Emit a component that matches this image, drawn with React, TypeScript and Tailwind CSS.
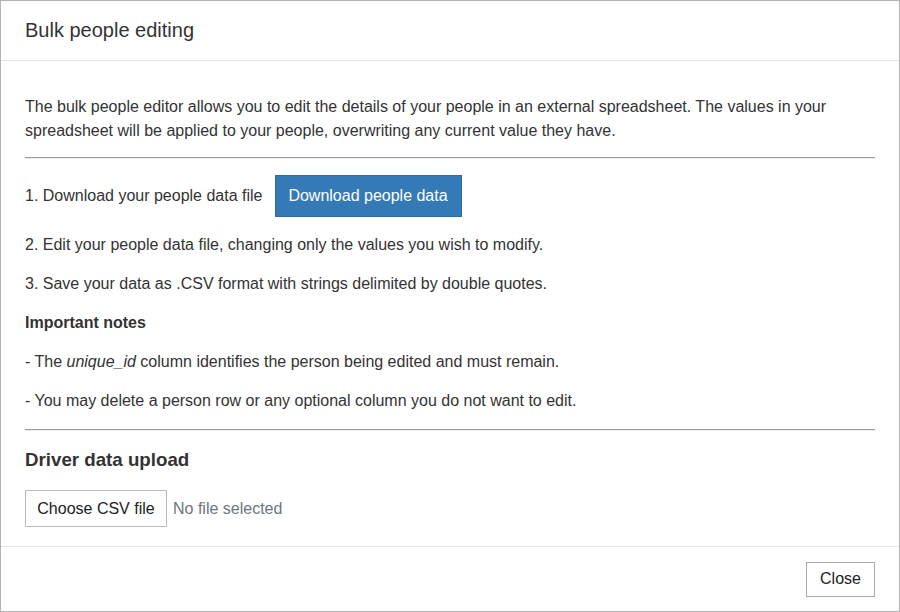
export default function App() {
  return (
    <div
      className="w-[900px] h-[612px] border border-[#b3b3b3] bg-white flex flex-col text-[#333] text-[16px] leading-[24px]"
      style={{ fontFamily: '"Liberation Sans", Arial, sans-serif' }}
    >
      <div className="h-[60px] border-b border-[#e5e5e5] px-[24px] pb-[2px] flex items-center shrink-0">
        <h1 className="text-[20px] leading-[24px] font-normal">Bulk people editing</h1>
      </div>
      <div className="flex-1 px-[24px] pt-[34px]">
        <p>
          The bulk people editor allows you to edit the details of your people in an external spreadsheet. The values in your
          spreadsheet will be applied to your people, overwriting any current value they have.
        </p>
        <hr className="mt-[14px] border-0 border-t border-t-[#999] border-b border-b-[#eee]" />
        <div className="mt-[16px] flex items-center gap-[12px]">
          <span>1. Download your people data file</span>
          <button className="h-[42px] w-[187px] bg-[#337ab7] border border-[#2e6da4] text-white text-[16px]">
            Download people data
          </button>
        </div>
        <p className="mt-[16px]">2. Edit your people data file, changing only the values you wish to modify.</p>
        <p className="mt-[15px]">3. Save your data as .CSV format with strings delimited by double quotes.</p>
        <p className="mt-[15px] font-bold">Important notes</p>
        <p className="mt-[15px]">
          - The <em>unique_id</em> column identifies the person being edited and must remain.
        </p>
        <p className="mt-[15px]">- You may delete a person row or any optional column you do not want to edit.</p>
        <hr className="mt-[16px] border-0 border-t border-t-[#999] border-b border-b-[#eee]" />
        <h2 className="mt-[17px] text-[18.72px] leading-[24px] font-bold">Driver data upload</h2>
        <div className="mt-[18px] flex items-center gap-[6px]">
          <button className="h-[37px] w-[142px] border border-[#bbb] bg-white text-[16px] text-[#222]">
            Choose CSV file
          </button>
          <span className="text-[#6c757d]">No file selected</span>
        </div>
      </div>
      <div className="h-[65px] border-t border-[#e5e5e5] px-[24px] flex items-center justify-end shrink-0">
        <button className="h-[35px] w-[69px] border border-[#aaa] bg-white text-[16px] text-[#222]">Close</button>
      </div>
    </div>
  );
}
